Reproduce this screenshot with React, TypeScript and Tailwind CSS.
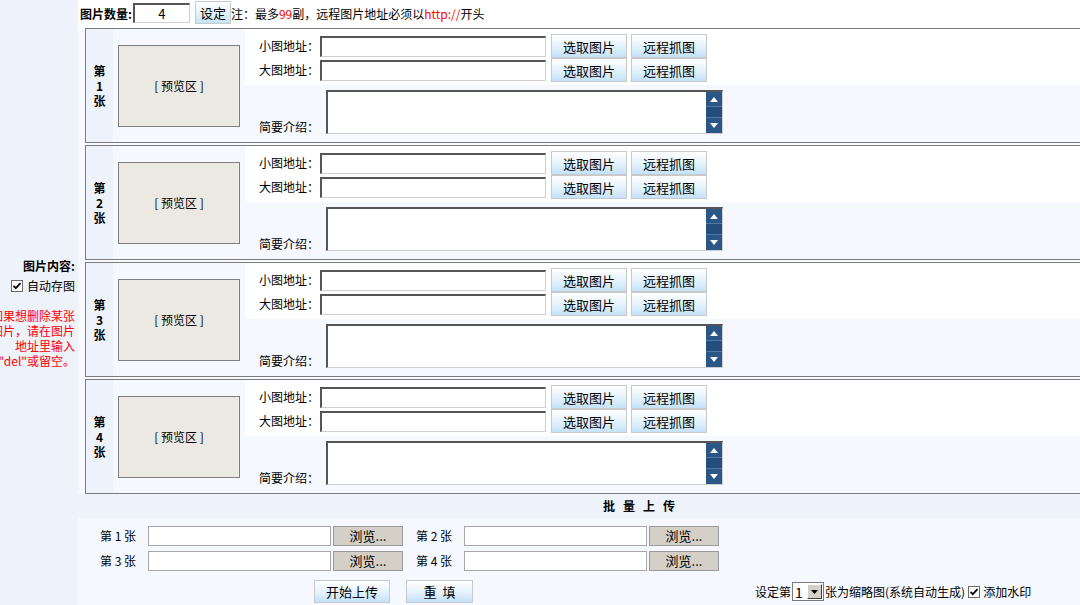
import React from "react";

function Check() {
  return (
    <span className="inline-flex w-[12px] h-[12px] border border-[#6b6b6b] bg-white items-center justify-center shrink-0">
      <svg width="10" height="10" viewBox="0 0 10 10">
        <path d="M1.5 4.8 L3.8 7.2 L8.5 2.2" stroke="#000" strokeWidth="1.8" fill="none" />
      </svg>
    </span>
  );
}

function BlueBtn({ children, className }: { children: React.ReactNode; className: string }) {
  return (
    <div
      className={`flex items-center justify-center border border-[#c9c9c9] bg-linear-to-b from-[#ffffff] via-[#e6f3fd] to-[#c3e2fa] text-[13px] leading-none text-black ${className}`}
    >
      {children}
    </div>
  );
}

function Inset({ className }: { className: string }) {
  return (
    <div
      className={`bg-white border border-[#cfcfcf] border-t-2 border-l-2 border-t-[#555555] border-l-[#555555] ${className}`}
    />
  );
}

function Card({ n }: { n: number }) {
  return (
    <div className="h-[115px] w-[1112px] border border-[#7c7c7c] flex shrink-0">
      <div className="w-[27px] bg-[#eef2fb] flex flex-col items-center justify-center font-bold leading-[15px] text-[12px]">
        <span>第</span>
        <span>{n}</span>
        <span>张</span>
      </div>
      <div className="w-[132px] bg-[#f5f8ff] flex items-center pl-[5px]">
        <div className="w-[122px] h-[82px] bg-[#ece9e3] border border-[#7f7f7f] flex items-center justify-center text-[12px] leading-none">
          [ 预览区 ]
        </div>
      </div>
      <div className="flex-1 flex flex-col">
        <div className="h-[56px] bg-white pt-[5px] flex flex-col">
          {["小图地址：", "大图地址："].map((l) => (
            <div key={l} className="h-[24px] flex items-center">
              <div className="w-[75px] pl-[14px] text-[12px] leading-none">{l}</div>
              <Inset className="w-[226px] h-[21px]" />
              <BlueBtn className="ml-[5px] w-[76px] h-[24px]">选取图片</BlueBtn>
              <BlueBtn className="ml-[4px] w-[76px] h-[24px]">远程抓图</BlueBtn>
            </div>
          ))}
        </div>
        <div className="flex-1 bg-[#f5f8ff] flex items-start pt-[5px]">
          <div className="w-[81px] pl-[14px] h-[44px] flex items-end pb-[1px] text-[12px] leading-none">
            简要介绍：
          </div>
          <div className="w-[397px] h-[44px] bg-white border border-[#cfcfcf] border-t-2 border-l-2 border-t-[#555555] border-l-[#555555] flex justify-end">
            <div className="w-[16px] h-full flex flex-col">
              <div className="h-[15px] bg-[#2b5787] border-b border-[#4f79a6] flex items-center justify-center">
                <svg width="8" height="5" viewBox="0 0 8 5">
                  <path d="M0 5 L4 0 L8 5 Z" fill="#fff" />
                </svg>
              </div>
              <div className="flex-1 bg-[#234e7c]" />
              <div className="h-[16px] bg-[#2b5787] border-t border-[#4f79a6] flex items-center justify-center">
                <svg width="8" height="5" viewBox="0 0 8 5">
                  <path d="M0 0 L4 5 L8 0 Z" fill="#fff" />
                </svg>
              </div>
            </div>
          </div>
        </div>
      </div>
    </div>
  );
}

function BatchRow({ a, b }: { a: number; b: number }) {
  return (
    <div className="h-[25px] flex items-center pl-[22px] text-[12px] leading-none">
      <div className="w-[48px]">第 {a} 张</div>
      <div className="w-[183px] h-[20px] bg-white border border-[#a7a7a7]" />
      <div className="ml-[2px] w-[70px] h-[20px] bg-[#d4d0c8] border border-[#9a9a9a] flex items-center justify-center text-[13px]">
        浏览...
      </div>
      <div className="ml-[13px] w-[48px]">第 {b} 张</div>
      <div className="w-[183px] h-[20px] bg-white border border-[#a7a7a7]" />
      <div className="ml-[2px] w-[70px] h-[20px] bg-[#d4d0c8] border border-[#9a9a9a] flex items-center justify-center text-[13px]">
        浏览...
      </div>
    </div>
  );
}

export default function App() {
  return (
    <div className="w-[1080px] h-[605px] overflow-hidden flex bg-white text-black text-[12px] font-['Noto_Sans_CJK_SC','Noto_Sans',sans-serif]">
      <div className="w-[78px] shrink-0 bg-[#eef2fb] flex flex-col items-end pr-[3px] pt-[258px]">
        <div className="font-bold leading-[15px] whitespace-nowrap">图片内容:</div>
        <div className="mt-[5px] h-[15px] flex items-center gap-[4px] whitespace-nowrap">
          <Check />
          <span className="leading-none">自动存图</span>
        </div>
        <div className="mt-[15px] flex flex-col items-end text-[#ff0000] leading-[15px] whitespace-nowrap">
          <span>如果想删除某张</span>
          <span>图片，请在图片</span>
          <span>地址里输入</span>
          <span>"del"或留空。</span>
        </div>
      </div>
      <div className="w-[1122px] shrink-0 bg-[#f7f9ff] flex flex-col">
        <div className="h-[28px] bg-white flex items-center pl-[2px] whitespace-nowrap">
          <span className="font-bold leading-none">图片数量:</span>
          <div className="ml-[1px] w-[57px] h-[20px] bg-white border border-[#cfcfcf] border-t-2 border-l-2 border-t-[#555555] border-l-[#555555] flex items-center justify-center text-[13px] leading-none mb-[2px]">
            4
          </div>
          <BlueBtn className="ml-[5px] w-[36px] h-[23px] mb-[3px]">设定</BlueBtn>
          <span className="leading-none">
            注：最多<span className="text-[#ff0000]">99</span>副，远程图片地址必须以
            <span className="text-[#ff0000]">http://</span>开头
          </span>
        </div>
        <div className="flex flex-col gap-[2px] pl-[7px]">
          <Card n={1} />
          <Card n={2} />
          <Card n={3} />
          <Card n={4} />
        </div>
        <div className="h-[24px] bg-[#eef2fb] flex items-center justify-center gap-[8px] font-bold leading-none">
          <span>批</span>
          <span>量</span>
          <span>上</span>
          <span>传</span>
        </div>
        <div className="flex-1 bg-[#f5f8ff] flex flex-col pt-[5px]">
          <BatchRow a={1} b={2} />
          <BatchRow a={3} b={4} />
          <div className="flex items-start pt-[7px] whitespace-nowrap">
            <BlueBtn className="ml-[236px] w-[76px] h-[23px]">开始上传</BlueBtn>
            <BlueBtn className="ml-[16px] w-[67px] h-[23px]">重&nbsp;&nbsp;填</BlueBtn>
            <div className="ml-[282px] mt-[2px] h-[19px] flex items-center leading-none">
              <span>设定第</span>
              <div className="ml-[1px] w-[32px] h-[19px] bg-white border border-[#7a7a7a] flex items-center">
                <span className="flex-1 text-[14px] pl-[2px] leading-none">1</span>
                <div className="w-[15px] h-[15px] mr-[1px] bg-[#d4d0c8] border border-t-white border-l-white border-b-[#404040] border-r-[#404040] flex items-center justify-center">
                  <svg width="7" height="4" viewBox="0 0 7 4">
                    <path d="M0 0 L3.5 4 L7 0 Z" fill="#000" />
                  </svg>
                </div>
              </div>
              <span className="ml-[1px]">张为缩略图(系统自动生成)</span>
              <span className="ml-[3px]">
                <Check />
              </span>
              <span className="ml-[3px]">添加水印</span>
            </div>
          </div>
        </div>
      </div>
    </div>
  );
}
